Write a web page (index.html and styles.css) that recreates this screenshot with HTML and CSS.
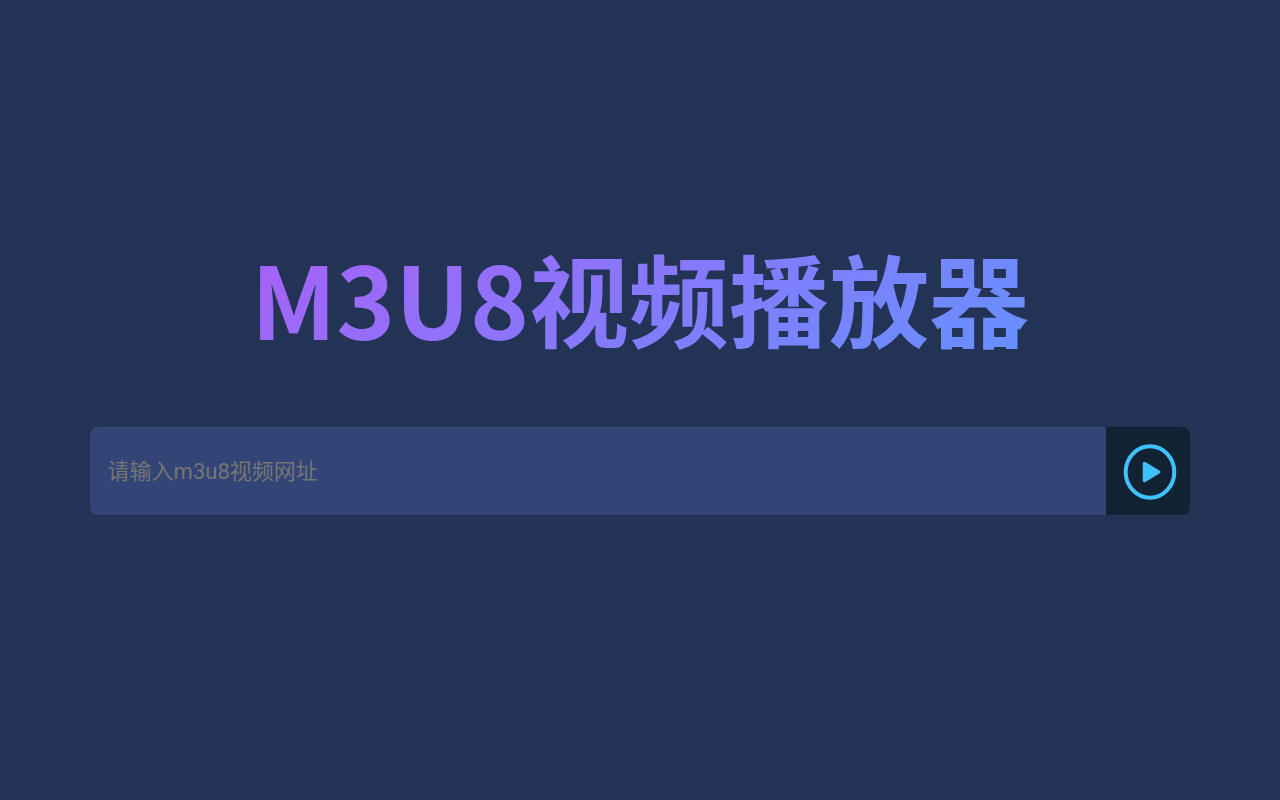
FILE: index.html
```html
<!DOCTYPE html>
<html lang="zh-CN">
<head>
<meta charset="UTF-8">
<meta name="viewport" content="width=device-width, initial-scale=1.0">
<title>M3U8视频播放器</title>
<link rel="stylesheet" href="styles.css">
</head>
<body>
<div class="container">
  <h1>M3U8视频播放器</h1>
  <form class="search" id="playForm">
    <input type="text" id="urlInput" placeholder="请输入m3u8视频网址" aria-label="视频网址" autocomplete="off">
    <button type="submit" aria-label="播放">
      <svg viewBox="0 0 54 58" width="54" height="58">
        <ellipse cx="27" cy="30" rx="24.300" ry="25.700" fill="none" stroke="#40c0ff" stroke-width="4"/>
        <path d="M21.500 21.500 L35.500 30 L21.500 38.500 Z" fill="#40c0ff" stroke="#40c0ff" stroke-width="3.500" stroke-linejoin="round"/>
      </svg>
    </button>
  </form>
</div>

<script>
  document.getElementById("playForm").addEventListener("submit", e => {
    e.preventDefault();
    const url = document.getElementById("urlInput").value.trim();
    if (url) {
      location.hash = encodeURIComponent(url);
    }
  });
</script>
</body>
</html>
```

FILE: styles.css
```css
* {
  box-sizing: border-box;
}
body {
  margin: 0;
  background-color: #235;
  font-family: Roboto, "Noto Sans CJK SC", sans-serif;
}
.container {
  min-height: 100vh;
  padding-bottom: 62px;
  display: flex;
  flex-direction: column;
  align-items: center;
  justify-content: center;
}
h1 {
  margin: 0 0 56px;
  font-family: "Noto Sans CJK SC", sans-serif;
  font-size: 100px;
  line-height: 148px;
  font-weight: bold;
  color: transparent;
  background-image: linear-gradient(145deg, #a95ff7, #6492ff);
  -webkit-background-clip: text;
  background-clip: text;
}
.search {
  display: flex;
  width: 86%;
  height: 88px;
  border-radius: 8px;
  overflow: hidden;
}
input {
  flex: 1;
  min-width: 0;
  padding: 0 18px;
  border: none;
  outline: none;
  background-color: #347;
  color: #fff;
  font-family: inherit;
  font-size: 22px;
}
input::placeholder {
  color: #757575;
}
button {
  width: 84px;
  padding: 0 0 0 4px;
  border: none;
  background-color: #123;
  cursor: pointer;
}
button svg {
  display: block;
  margin: 0 auto;
}
```
